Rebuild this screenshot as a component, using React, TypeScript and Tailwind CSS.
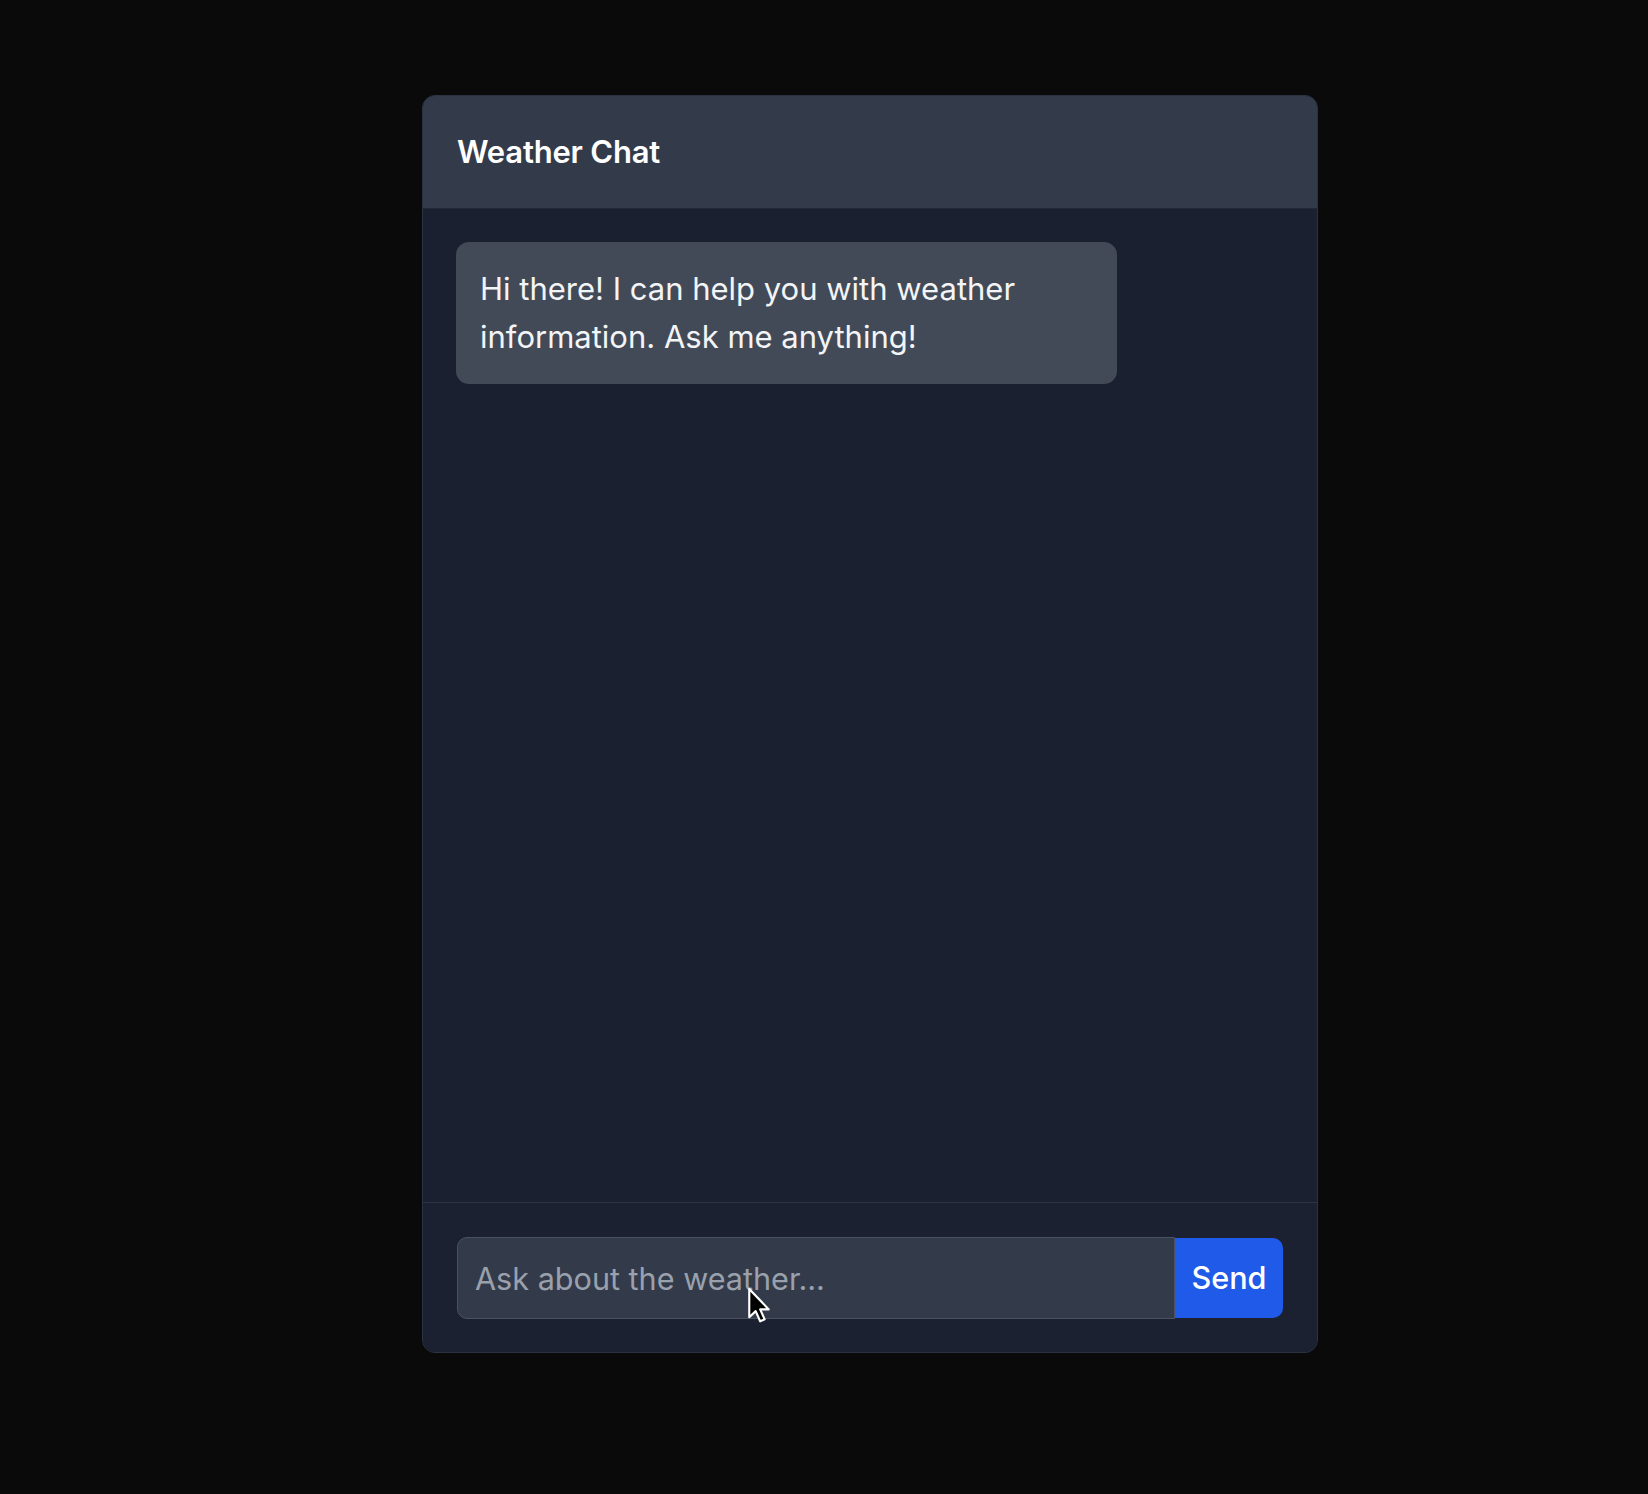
import { useState } from 'react'

function Cursor() {
  return (
    <svg
      className="pointer-events-none absolute left-[747px] top-[1287px]"
      width="24"
      height="37"
      viewBox="0 0 12 19"
    >
      <path
        d="M1 1 L1 15.5 L4.3 12.4 L6.6 17.6 L8.9 16.6 L6.6 11.5 L11 11.5 Z"
        fill="black"
        stroke="white"
        strokeWidth="1.1"
        strokeLinejoin="round"
      />
    </svg>
  )
}

export default function App() {
  const [text, setText] = useState('')

  return (
    <div className="relative min-h-[1494px] bg-[#0a0a0b] pl-[422px] pt-[95px] font-['Inter','Liberation_Sans',sans-serif]">
      <div className="flex h-[1258px] w-[896px] flex-col overflow-hidden rounded-[13px] border border-[#2b3342] bg-[#1a2030]">
        <div className="flex h-[113px] items-center border-b border-[#222937] bg-[#333b4b] px-[34px]">
          <h1 className="text-[31px] font-semibold tracking-[-0.2px] text-white">Weather Chat</h1>
        </div>

        <div className="flex flex-1 flex-col px-[33px] pt-[33px]">
          <div className="w-[661px] rounded-[13px] bg-[#424a58] px-[24px] py-[23px] text-[31px] leading-[48px] text-[#f3f4f6]">
            Hi there! I can help you with weather information. Ask me anything!
          </div>
        </div>

        <div className="flex border-t border-[#2c3445] bg-[#1b2130] px-[34px] pb-[33px] pt-[34px]">
          <input
            value={text}
            onChange={(e) => setText(e.target.value)}
            placeholder="Ask about the weather..."
            className="h-[82px] flex-1 rounded-l-[10px] border border-[#4a5262] bg-[#333b4a] px-[17px] text-[30.6px] text-white outline-none placeholder:text-[#9aa1ad]"
          />
          <button className="my-[1px] h-[80px] w-[108px] rounded-r-[10px] bg-[#1f5ae8] text-[30.6px] font-medium text-white">
            Send
          </button>
        </div>
      </div>
      <Cursor />
    </div>
  )
}
